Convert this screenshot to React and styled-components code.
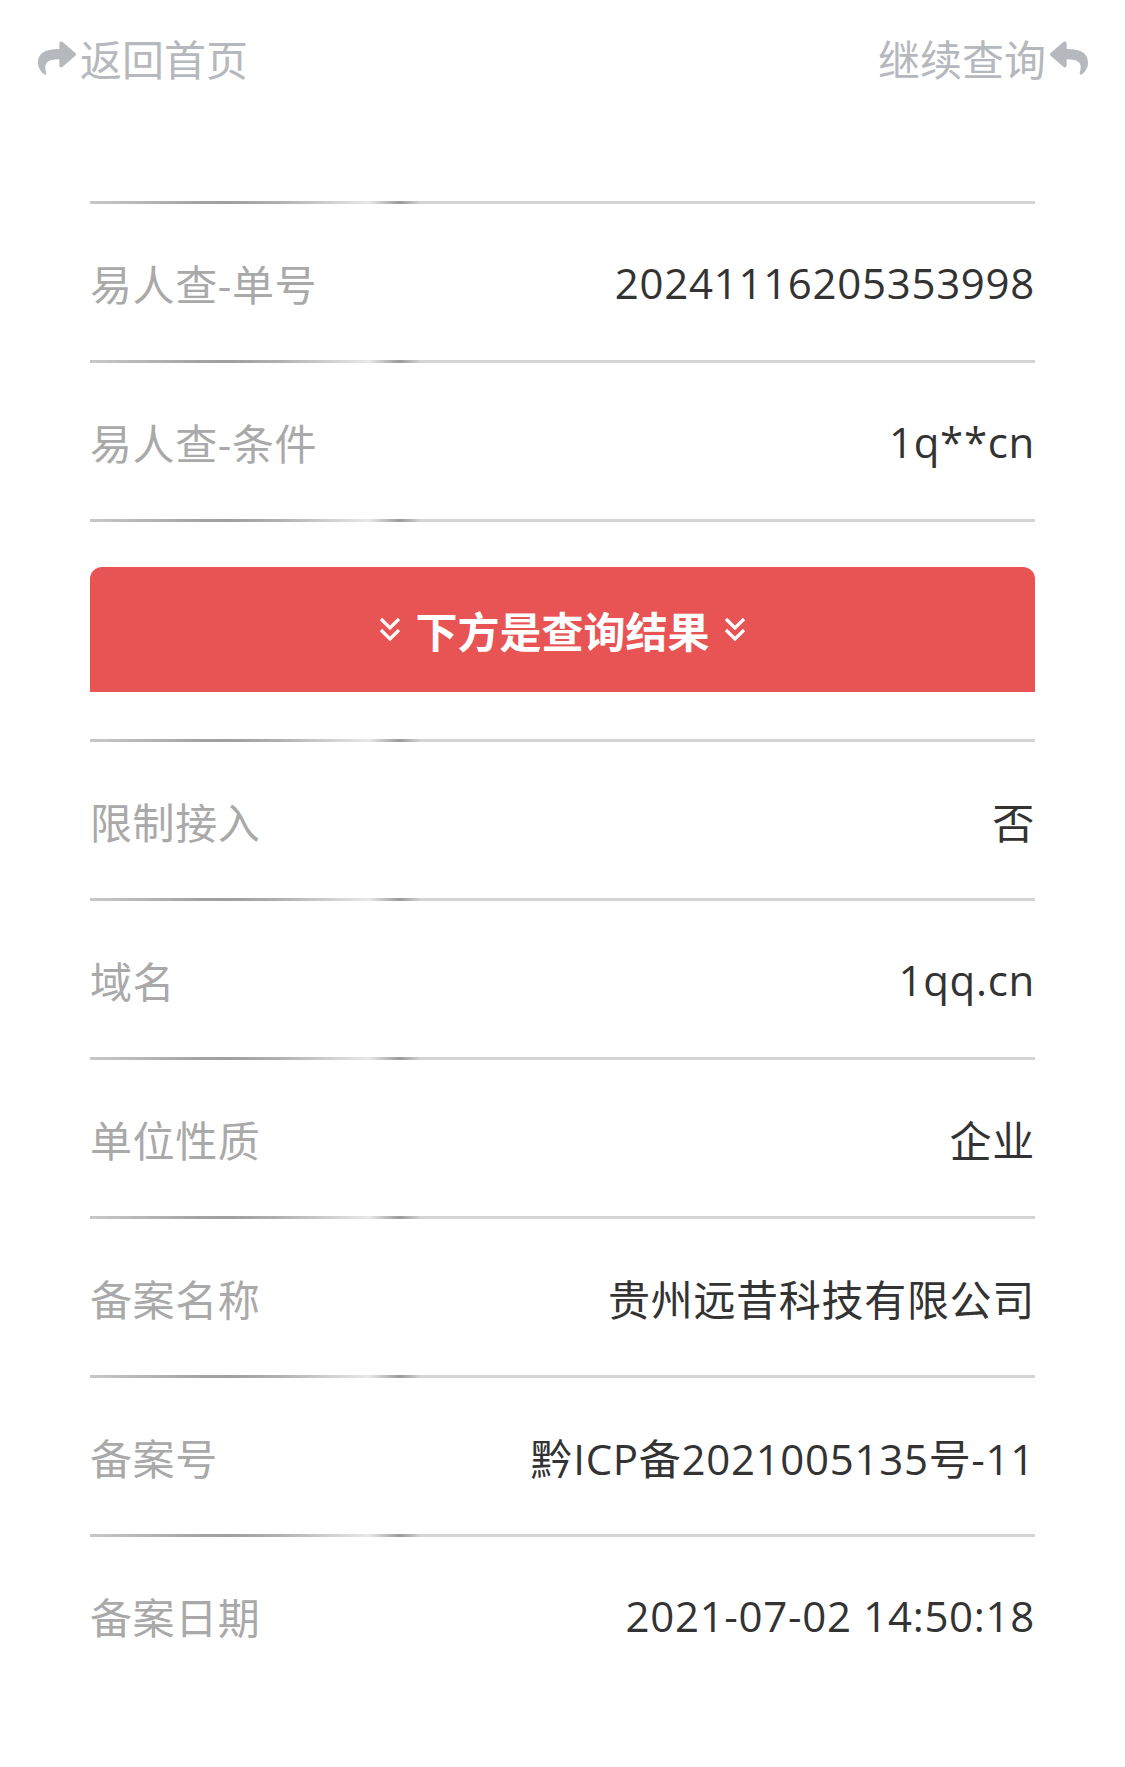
import React from "react";
import styled, { createGlobalStyle } from "styled-components";
import { FaShare, FaReply } from "react-icons/fa";

const GlobalStyle = createGlobalStyle`
  html, body {
    margin: 0;
    padding: 0;
    background: #fff;
    font-family: "Open Sans", "Noto Sans CJK SC", sans-serif;
  }
`;

const Page = styled.div`
  width: 1125px;
  min-height: 1767px;
  background: #fff;
`;

const Header = styled.div`
  height: 115px;
  padding: 0 35px 0 36px;
  display: flex;
  align-items: center;
  justify-content: space-between;
`;

const NavLink = styled.a`
  display: flex;
  align-items: center;
  gap: 2px;
  color: #b5b8bd;
  font-size: 42px;
  font-family: "Noto Sans CJK SC", sans-serif;
  text-decoration: none;
  cursor: pointer;

  svg {
    width: 42px;
    height: 38px;
    color: #b5b8bd;
  }
`;

const Main = styled.div`
  padding: 86px 90px 0;
`;

const Divider = styled.div`
  height: 3px;
  background: linear-gradient(
    to right,
    #c8c8c8 0%,
    #a2a2a2 12%,
    #a0a0a0 15%,
    #b0b0b0 20%,
    #e8e8e8 29.5%,
    #9a9a9a 32.8%,
    #d4d4d4 35%,
    #d4d4d4 100%
  );
`;

const Row = styled.div`
  height: 156px;
  display: flex;
  align-items: center;
  justify-content: space-between;
  font-size: 42px;
`;

const Label = styled.span`
  color: #a9a9a9;
  letter-spacing: 0.6px;
`;

const Value = styled.span`
  color: #333;
  letter-spacing: 0.7px;
`;

const Banner = styled.div`
  margin: 45px 0 47px;
  height: 125px;
  background: #e85353;
  border-radius: 12px 12px 0 0;
  display: flex;
  align-items: center;
  justify-content: center;
  gap: 14px;
  color: #fff;
  font-family: "Noto Sans CJK SC", sans-serif;
  font-weight: 700;
  font-size: 42px;
`;

const Chevrons = () => (
  <svg width="22" height="26" viewBox="0 0 22 26" fill="none" stroke="#fff" strokeWidth="3.2">
    <polyline points="2,2 11,11 20,2" />
    <polyline points="2,13 11,22 20,13" />
  </svg>
);

const head = [
  ["易人查-单号", "20241116205353998"],
  ["易人查-条件", "1q**cn"],
];

const results = [
  ["限制接入", "否"],
  ["域名", "1qq.cn"],
  ["单位性质", "企业"],
  ["备案名称", "贵州远昔科技有限公司"],
  ["备案号", "黔ICP备2021005135号-11"],
  ["备案日期", "2021-07-02 14:50:18"],
];

const InfoRow = ({ label, value }) => (
  <>
    <Divider />
    <Row>
      <Label>{label}</Label>
      <Value>{value}</Value>
    </Row>
  </>
);

const App = () => {
  return (
    <Page>
      <GlobalStyle />
      <Header>
        <NavLink>
          <FaShare />
          返回首页
        </NavLink>
        <NavLink>
          继续查询
          <FaReply />
        </NavLink>
      </Header>
      <Main>
        {head.map(([label, value]) => (
          <InfoRow key={label} label={label} value={value} />
        ))}
        <Divider />
        <Banner>
          <Chevrons />
          下方是查询结果
          <Chevrons />
        </Banner>
        {results.map(([label, value]) => (
          <InfoRow key={label} label={label} value={value} />
        ))}
      </Main>
    </Page>
  );
};

export default App;
